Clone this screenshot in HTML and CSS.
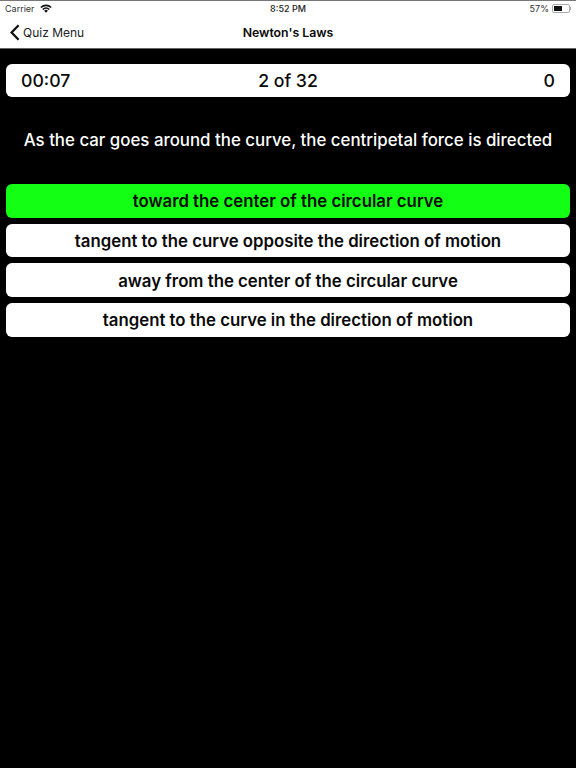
FILE: index.html
```html
<!DOCTYPE html>
<html>
<head>
  <meta charset="UTF-8">
  <title>Newton's Laws</title>
  <link rel="stylesheet" href="styles.css">
</head>
<body>
  <div class="status-bar">
    <div class="status-left">
      <span>Carrier</span>
      <svg class="wifi" width="12" height="9" viewBox="0 0 12 9">
        <path d="M0.3 3 A8 8 0 0 1 11.7 3 L10.6 4.1 A6.5 6.5 0 0 0 1.4 4.1 Z" fill="#111"/>
        <path d="M2.2 4.9 A5.3 5.3 0 0 1 9.8 4.9 L8.7 6 A3.8 3.8 0 0 0 3.3 6 Z" fill="#111"/>
        <path d="M4.1 6.8 A2.7 2.7 0 0 1 7.9 6.8 L6 8.8 Z" fill="#111"/>
      </svg>
    </div>
    <div class="status-time">8:52 PM</div>
    <div class="status-right">
      <span>57%</span>
      <div class="battery"><div class="battery-level"></div></div>
      <div class="battery-tip"></div>
    </div>
  </div>

  <div class="nav-bar">
    <div class="nav-back">
      <svg width="10" height="17" viewBox="0 0 10 17">
        <path d="M8.6 1.2 L1.6 8.5 L8.6 15.8" fill="none" stroke="#111" stroke-width="2.3"/>
      </svg>
      <span>Quiz Menu</span>
    </div>
    <div class="nav-title">Newton's Laws</div>
  </div>

  <div class="content">
    <div class="score-card">
      <span>00:07</span>
      <span class="score-count">2 of 32</span>
      <span class="score-points">0</span>
    </div>

    <p class="question">As the car goes around the curve, the centripetal force is directed</p>

    <div class="answers">
      <div class="answer correct">toward the center of the circular curve</div>
      <div class="answer">tangent to the curve opposite the direction of motion</div>
      <div class="answer">away from the center of the circular curve</div>
      <div class="answer">tangent to the curve in the direction of motion</div>
    </div>
  </div>
</body>
</html>
```

FILE: styles.css
```css
body {
  margin: 0;
  height: 768px;
  overflow: hidden;
  background-color: #000;
  color: #0a0a0a;
  font-family: Inter, "Liberation Sans", sans-serif;
}

.status-bar {
  display: grid;
  grid-template-columns: 1fr auto 1fr;
  align-items: center;
  height: 15px;
  padding: 0 5px;
  background-color: #fff;
  border-top: 1px solid #777;
  font-size: 9px;
  color: #333;
}

.status-left {
  display: flex;
  align-items: center;
  gap: 5px;
}

.status-time {
  font-weight: 500;
  color: #222;
}

.status-right {
  display: flex;
  align-items: center;
  justify-content: flex-end;
}

.battery {
  box-sizing: border-box;
  width: 18px;
  height: 9px;
  margin-left: 3px;
  padding: 1px;
  border: 1px solid #aaa;
  border-radius: 2px;
}

.battery-level {
  width: 60%;
  height: 100%;
  background-color: #111;
}

.battery-tip {
  width: 1px;
  height: 3px;
  background-color: #aaa;
}

.nav-bar {
  position: relative;
  display: flex;
  align-items: center;
  justify-content: center;
  height: 32px;
  background-color: #fff;
  border-bottom: 1px solid #666;
}

.nav-back {
  position: absolute;
  left: 9.5px;
  top: 8px;
  display: flex;
  align-items: center;
  gap: 3.5px;
  font-size: 12px;
  color: #222;
}

.nav-title {
  font-size: 12.3px;
  font-weight: 600;
}

.content {
  padding: 15px 6px 0;
}

.score-card {
  display: grid;
  grid-template-columns: 1fr auto 1fr;
  align-items: center;
  height: 33px;
  padding: 0 15px;
  background-color: #fff;
  border-radius: 6px;
  font-size: 17.7px;
  font-weight: 500;
}

.score-points {
  text-align: right;
}

.question {
  margin: 32px 0 33px;
  color: #fff;
  font-size: 16.85px;
  font-weight: 500;
  line-height: 22px;
  text-align: center;
}

.answers {
  display: flex;
  flex-direction: column;
  gap: 6px;
}

.answer {
  display: flex;
  align-items: center;
  justify-content: center;
  box-sizing: border-box;
  height: 33.7px;
  padding-top: 1px;
  background-color: #fff;
  border-radius: 6px;
  font-size: 16.8px;
  font-weight: 600;
}

.answer.correct {
  background-color: #13ff13;
}
```
